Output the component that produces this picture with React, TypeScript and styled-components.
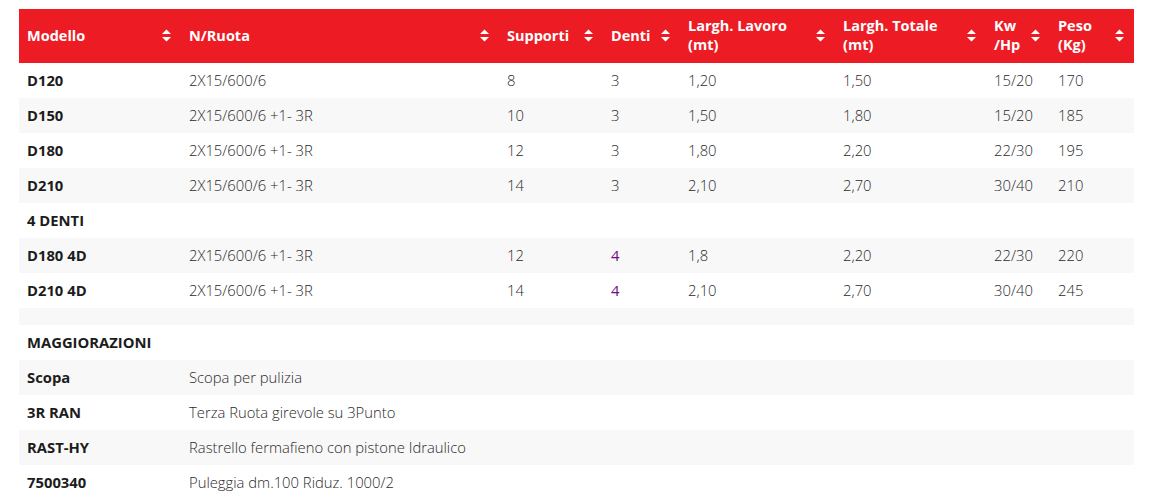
import React from 'react';
import styled, { createGlobalStyle } from 'styled-components';

const GlobalStyle = createGlobalStyle`
  html, body {
    margin: 0;
    padding: 0;
    background: #fff;
  }
  body {
    font-family: 'Open Sans', 'Liberation Sans', sans-serif;
    color: #333;
  }
`;

const PageTag = styled.div`
  padding: 9px 15px 0 19px;
`;

const TableTag = styled.table`
  width: 1115px;
  border-collapse: collapse;
  table-layout: fixed;
  font-size: 14.8px;
`;

const HeadCellTag = styled.th`
  background: #ed1c24;
  color: #fff;
  font-weight: 700;
  font-size: 14.5px;
  text-align: left;
  vertical-align: middle;
  padding: 7px 10px 9px 8px;
  height: 38px;
  line-height: 19px;
`;

const HeadInnerTag = styled.div`
  display: flex;
  align-items: center;
  justify-content: space-between;
  gap: 6px;
`;

const RowTag = styled.tr<{ $striped: boolean }>`
  background: ${({ $striped }) => ($striped ? '#f8f8f8' : '#fff')};
`;

const CellTag = styled.td<{ $bold?: boolean; $accent?: boolean }>`
  padding: 8px;
  line-height: 19px;
  font-weight: ${({ $bold, $accent }) => ($bold ? 700 : $accent ? 400 : 300)};
  color: ${({ $bold, $accent }) => ($accent ? '#6e0d80' : $bold ? '#1c1c1c' : '#2a2a2a')};
  white-space: nowrap;
`;

const SpacerCellTag = styled.td`
  height: 1px;
  padding: 8px;
`;

const SortIcon = () => (
  <svg width="9" height="13" viewBox="0 0 9 13" style={{ flexShrink: 0 }}>
    <polygon points="0,5 4.5,0.5 9,5" fill="#fff" />
    <polygon points="0,8 4.5,12.5 9,8" fill="#fff" />
  </svg>
);

const COLUMNS: { width: number; label: React.ReactNode }[] = [
  { width: 162, label: 'Modello' },
  { width: 318, label: 'N/Ruota' },
  { width: 104, label: 'Supporti' },
  { width: 77, label: 'Denti' },
  { width: 155, label: <>Largh. Lavoro<br />(mt)</> },
  { width: 151, label: <>Largh. Totale<br />(mt)</> },
  { width: 64, label: <>Kw<br />/Hp</> },
  { width: 84, label: <>Peso<br />(Kg)</> },
];

type Row =
  | { kind: 'data'; cells: string[]; accent?: boolean }
  | { kind: 'section'; title: string }
  | { kind: 'spacer' }
  | { kind: 'extra'; code: string; text: string };

const ROWS: Row[] = [
  { kind: 'data', cells: ['D120', '2X15/600/6', '8', '3', '1,20', '1,50', '15/20', '170'] },
  { kind: 'data', cells: ['D150', '2X15/600/6 +1- 3R', '10', '3', '1,50', '1,80', '15/20', '185'] },
  { kind: 'data', cells: ['D180', '2X15/600/6 +1- 3R', '12', '3', '1,80', '2,20', '22/30', '195'] },
  { kind: 'data', cells: ['D210', '2X15/600/6 +1- 3R', '14', '3', '2,10', '2,70', '30/40', '210'] },
  { kind: 'section', title: '4 DENTI' },
  { kind: 'data', accent: true, cells: ['D180 4D', '2X15/600/6 +1- 3R', '12', '4', '1,8', '2,20', '22/30', '220'] },
  { kind: 'data', accent: true, cells: ['D210 4D', '2X15/600/6 +1- 3R', '14', '4', '2,10', '2,70', '30/40', '245'] },
  { kind: 'spacer' },
  { kind: 'section', title: 'MAGGIORAZIONI' },
  { kind: 'extra', code: 'Scopa', text: 'Scopa per pulizia' },
  { kind: 'extra', code: '3R RAN', text: 'Terza Ruota girevole su 3Punto' },
  { kind: 'extra', code: 'RAST-HY', text: 'Rastrello fermafieno con pistone Idraulico' },
  { kind: 'extra', code: '7500340', text: 'Puleggia dm.100 Riduz. 1000/2' },
];

const renderRow = (row: Row) => {
  switch (row.kind) {
    case 'data':
      return row.cells.map((value, i) => (
        <CellTag key={i} $bold={i === 0} $accent={row.accent && i === 3}>
          {value}
        </CellTag>
      ));
    case 'section':
      return (
        <>
          <CellTag $bold>{row.title}</CellTag>
          <CellTag colSpan={7} />
        </>
      );
    case 'spacer':
      return <SpacerCellTag colSpan={8} />;
    case 'extra':
      return (
        <>
          <CellTag $bold>{row.code}</CellTag>
          <CellTag colSpan={7}>{row.text}</CellTag>
        </>
      );
  }
};

export default function App() {
  return (
    <PageTag>
      <GlobalStyle />
      <TableTag>
        <colgroup>
          {COLUMNS.map((col, i) => (
            <col key={i} style={{ width: col.width }} />
          ))}
        </colgroup>
        <thead>
          <tr>
            {COLUMNS.map((col, i) => (
              <HeadCellTag key={i}>
                <HeadInnerTag>
                  <span>{col.label}</span>
                  <SortIcon />
                </HeadInnerTag>
              </HeadCellTag>
            ))}
          </tr>
        </thead>
        <tbody>
          {ROWS.map((row, i) => (
            <RowTag key={i} $striped={i % 2 === 1}>
              {renderRow(row)}
            </RowTag>
          ))}
        </tbody>
      </TableTag>
    </PageTag>
  );
}
